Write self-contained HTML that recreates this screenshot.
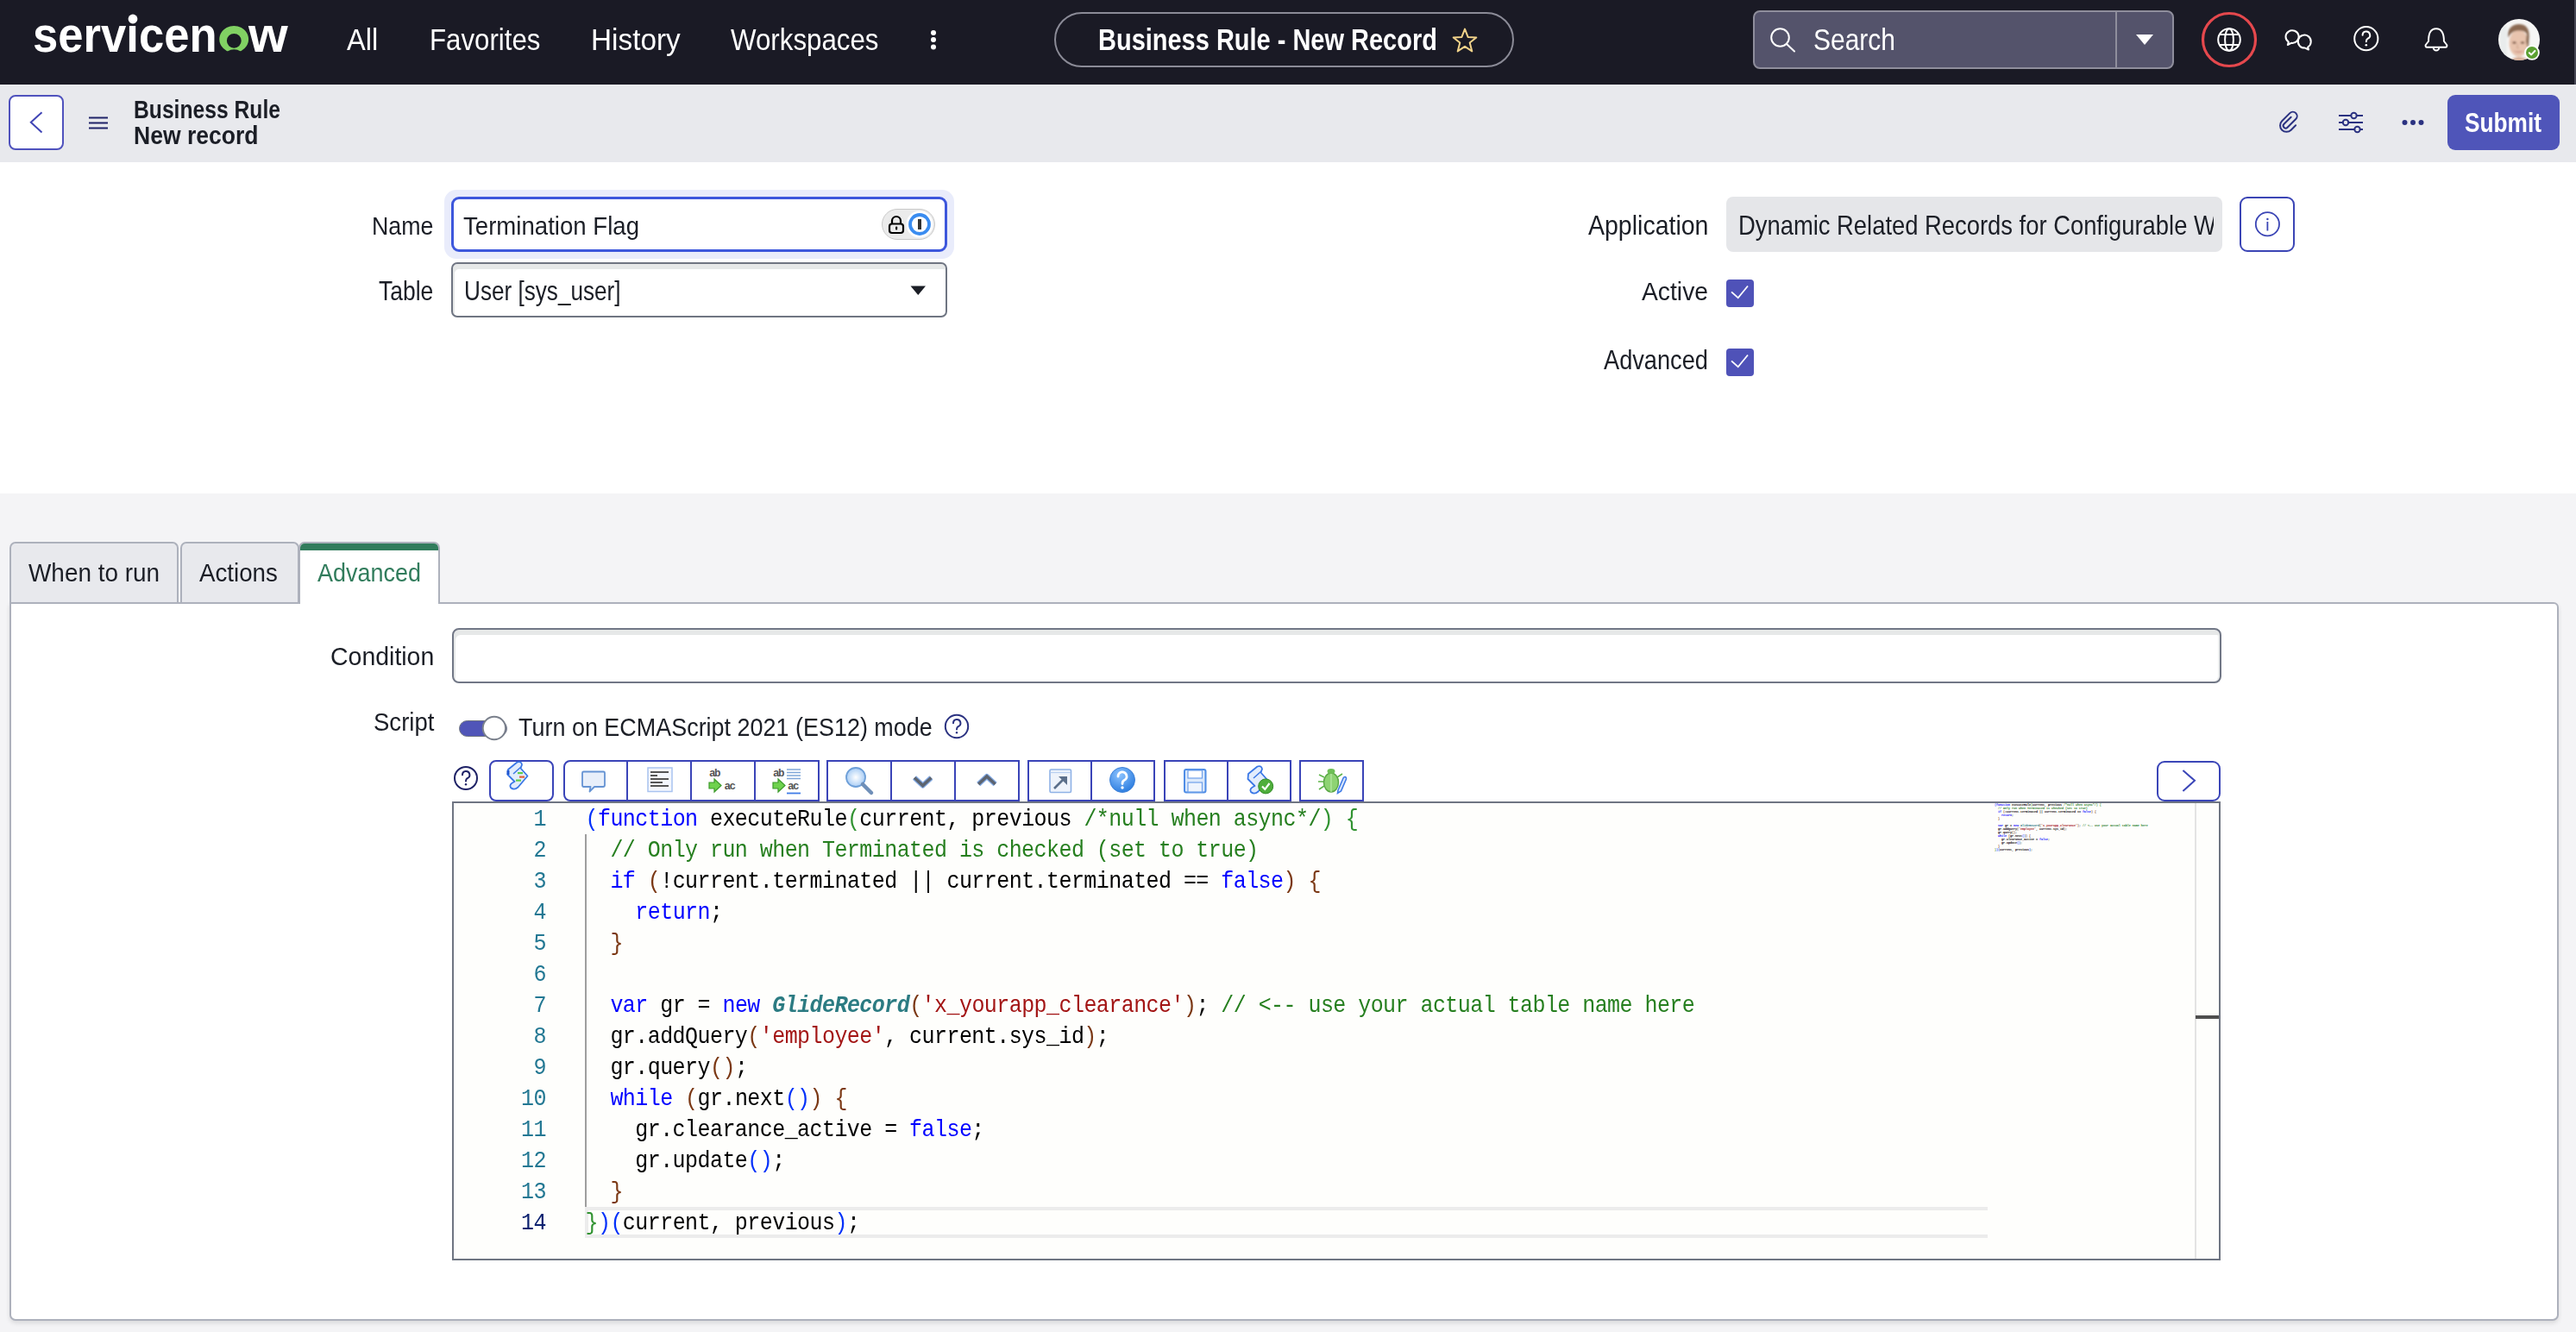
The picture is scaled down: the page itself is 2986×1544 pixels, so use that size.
<!DOCTYPE html>
<html><head><meta charset="utf-8"><title>Business Rule - New Record</title>
<style>
html,body{margin:0;padding:0;}
body{width:2986px;height:1544px;position:relative;overflow:hidden;background:#f4f4f6;font-family:"Liberation Sans",sans-serif;}
.t{position:absolute;white-space:nowrap;line-height:1;transform-origin:0 0;}
.b{position:absolute;box-sizing:border-box;}
.s{position:absolute;overflow:visible;}
.code{position:absolute;white-space:pre;font-family:"Liberation Mono",monospace;}
</style></head><body>
<div class="b" style="left:0px;top:0px;width:2986px;height:98px;background:#1a1a25"></div>
<div class="b" style="left:2984px;top:0px;width:2px;height:98px;background:#474755"></div>
<div class="b" style="left:0px;top:98px;width:2986px;height:90px;background:#e8e9ed"></div>
<div class="b" style="left:0px;top:188px;width:2986px;height:384px;background:#ffffff"></div>
<div class="b" style="left:0px;top:572px;width:2986px;height:972px;background:#f4f4f6"></div>
<div class="t" style="left:38.40px;top:11.56px;font-size:57.58px;transform:scaleX(0.9140);color:#ffffff;font-weight:bold;">servicen</div>
<div class="t" style="left:288.18px;top:11.56px;font-size:57.58px;transform:scaleX(1.0204);color:#ffffff;font-weight:bold;">w</div>
<div class="b" style="left:146px;top:14px;width:16px;height:13px;background:#1a1a25"></div>
<svg class="s" style="left:146px;top:14px;" width="16" height="16" viewBox="0 0 16 16"><circle cx="8" cy="8" r="5.4" fill="#fff"/></svg>
<svg class="s" style="left:250px;top:26px;" width="44" height="40" viewBox="0 0 44 40"><defs><mask id="lgm" maskUnits="userSpaceOnUse" x="0" y="0" width="44" height="40"><rect x="0" y="0" width="44" height="40" fill="#fff"/><ellipse cx="21.3" cy="38.2" rx="10" ry="7" fill="#000"/></mask></defs><path mask="url(#lgm)" fill="#81d163" fill-rule="evenodd" d="M21.2 3.9 A16.9 15.6 0 1 1 21.19 3.9 Z M21.3 21.3 m-8.4 0 a8.4 8.4 0 1 0 16.8 0 a8.4 8.4 0 1 0 -16.8 0 Z"/></svg>
<div class="t" style="left:402.00px;top:28.62px;font-size:34.88px;transform:scaleX(0.9341);color:#ffffff;">All</div>
<div class="t" style="left:497.80px;top:28.62px;font-size:34.88px;transform:scaleX(0.8951);color:#ffffff;">Favorites</div>
<div class="t" style="left:685.20px;top:28.62px;font-size:34.88px;transform:scaleX(0.9565);color:#ffffff;">History</div>
<div class="t" style="left:846.50px;top:28.62px;font-size:34.88px;transform:scaleX(0.8967);color:#ffffff;">Workspaces</div>
<svg class="s" style="left:1076px;top:32px;" width="12" height="28" viewBox="0 0 12 28"><circle cx="6" cy="6" r="3" fill="#fff"/><circle cx="6" cy="14" r="3" fill="#fff"/><circle cx="6" cy="22.4" r="3" fill="#fff"/></svg>
<div class="b" style="left:1222px;top:14px;width:533px;height:64px;border:2px solid #8b8b97;border-radius:32px"></div>
<div class="t" style="left:1273.00px;top:28.57px;font-size:34.88px;transform:scaleX(0.8309);color:#ffffff;font-weight:bold;">Business Rule - New Record</div>
<svg class="s" style="left:1682px;top:31px;" width="32" height="32" viewBox="0 0 32 32"><path d="M16 2.6 L19.6 11.9 L29.3 12.4 L21.7 18.6 L24.3 28.4 L16 22.9 L7.7 28.4 L10.3 18.6 L2.7 12.4 L12.4 11.9 Z" fill="none" stroke="#f2d38a" stroke-width="2" stroke-linejoin="round"/></svg>
<div class="b" style="left:2032px;top:12px;width:488px;height:68px;background:#54536b;border:2px solid #8f8e9c;border-radius:8px"></div>
<div class="b" style="left:2452px;top:12px;width:2px;height:68px;background:#8f8e9c"></div>
<svg class="s" style="left:2472px;top:36px;" width="28" height="20" viewBox="0 0 28 20"><path d="M4 4 L24 4 L14 16 Z" fill="#fff"/></svg>
<svg class="s" style="left:2048px;top:28px;" width="36" height="36" viewBox="0 0 36 36"><circle cx="15.5" cy="15.5" r="10.3" fill="none" stroke="#fff" stroke-width="2"/><path d="M23 23 L32 31.5" stroke="#fff" stroke-width="2" stroke-linecap="round"/></svg>
<div class="t" style="left:2102.00px;top:29.47px;font-size:34.88px;transform:scaleX(0.8596);color:#ffffff;">Search</div>
<svg class="s" style="left:2548px;top:10px;" width="72" height="72" viewBox="0 0 72 72"><circle cx="36" cy="36" r="30.5" fill="none" stroke="#e5484d" stroke-width="3.2"/><g fill="none" stroke="#fff" stroke-width="2"><circle cx="36" cy="36" r="12.8"/><ellipse cx="36" cy="36" rx="4.9" ry="12.8"/><path d="M24 30 H48 M24 42 H48"/></g></svg>
<svg class="s" style="left:2640px;top:26px;" width="48" height="40" viewBox="0 0 48 40"><g fill="none" stroke="#fff" stroke-width="2" stroke-linejoin="round"><path d="M12.8 22.6 L11.8 26 L16 23.8 A7.6 7.3 0 1 0 12.8 22.6 Z"/><path d="M35.2 28.5 L36 31.5 L31.8 29.6 A7.5 7.5 0 1 1 35.2 28.5 Z" fill="#1a1a25"/></g></svg>
<svg class="s" style="left:2724px;top:26px;" width="40" height="40" viewBox="0 0 40 40"><circle cx="18.8" cy="18.7" r="13.6" fill="none" stroke="#fff" stroke-width="2"/><path d="M14.6 14.8 A4.3 4.3 0 1 1 20.4 18.8 C19 19.6 18.8 20.5 18.8 22.3" fill="none" stroke="#fff" stroke-width="2" stroke-linecap="round"/><circle cx="18.8" cy="26.2" r="1.3" fill="#fff"/></svg>
<svg class="s" style="left:2804px;top:26px;" width="40" height="40" viewBox="0 0 40 40"><g transform="translate(20 18) scale(0.94) translate(-20 -18)"><path d="M10.5 22 C10.5 14 12 6.5 20 6.5 C28 6.5 29.5 14 29.5 22 L33 26.5 C33.6 27.8 33 29.5 31.5 29.5 H8.5 C7 29.5 6.4 27.8 7 26.5 Z" fill="none" stroke="#fff" stroke-width="2.1" stroke-linejoin="round"/><path d="M16.5 30 A3.5 3.5 0 0 0 23.5 30" fill="none" stroke="#fff" stroke-width="2.1"/></g></svg>
<svg class="s" style="left:2894px;top:20px;" width="56" height="56" viewBox="0 0 56 56"><defs><clipPath id="av"><circle cx="26" cy="26" r="24"/></clipPath><filter id="avb"><feGaussianBlur stdDeviation="0.9"/></filter></defs><g clip-path="url(#av)"><rect x="0" y="0" width="56" height="56" fill="#f6f6f5"/><g filter="url(#avb)"><rect x="4" y="10" width="8" height="40" fill="#e9ecec"/><path d="M16 52 C18 44 34 44 38 52 Z" fill="#d9b09a"/><ellipse cx="25.5" cy="30" rx="11" ry="15.5" fill="#e8c4ae"/><path d="M13 24 C12 13 18 8 26 8 C34 8 39 13 37.5 26 C36 19 33 15 26 15.5 C20 15.5 16 18 13 24 Z" fill="#8b6a52"/><path d="M35 18 C38 22 38 30 36 36 L34 28 Z" fill="#8b6a52"/><path d="M19 38 C22 42 29 42 32 38 C29 40 22 40 19 38 Z" fill="#c98c80"/><ellipse cx="20.5" cy="29.5" rx="2.3" ry="1.2" fill="#7a5444"/><ellipse cx="30" cy="29.5" rx="2.3" ry="1.2" fill="#7a5444"/><path d="M24.5 31 L23.5 35.5 L26 36" fill="none" stroke="#c9a08a" stroke-width="1"/></g></g><circle cx="41" cy="41" r="8.8" fill="#fff"/><circle cx="41" cy="41" r="7" fill="#5ba032"/><path d="M37.8 41.2 L40.2 43.4 L44.4 39" fill="none" stroke="#fff" stroke-width="2" stroke-linecap="round" stroke-linejoin="round"/></svg>
<div class="b" style="left:10px;top:110px;width:64px;height:64px;background:#fff;border:2px solid #4f52bd;border-radius:8px"></div>
<svg class="s" style="left:30px;top:126px;" width="24" height="32" viewBox="0 0 24 32"><path d="M18.5 4.2 L5.8 15.8 L18.5 27.4" fill="none" stroke="#4045b5" stroke-width="2"/></svg>
<svg class="s" style="left:100px;top:130.5px;" width="28" height="24" viewBox="0 0 28 24"><path d="M3 5.5 H25 M3 11.5 H25 M3 17.5 H25" stroke="#1f2368" stroke-width="2"/></svg>
<div class="t" style="left:155.00px;top:112.89px;font-size:29.07px;transform:scaleX(0.8486);color:#1b1e26;font-weight:bold;">Business Rule</div>
<div class="t" style="left:155.00px;top:142.89px;font-size:29.07px;transform:scaleX(0.9127);color:#1b1e26;font-weight:bold;">New record</div>
<svg class="s" style="left:2634px;top:124px;" width="40" height="40" viewBox="0 0 40 40"><g transform="translate(21.3 6.1) rotate(45)"><path d="M4.2 3.7 L4.2 15.2 A2.8 2.8 0 0 0 9.8 15.2 L9.8 1.4 A4.9 4.9 0 0 0 0 1.4 L0 14.3 A7.4 7.4 0 0 0 14.8 14.3 L14.8 6.6" fill="none" stroke="#2b3281" stroke-width="2" stroke-linecap="round"/></g></svg>
<svg class="s" style="left:2706px;top:124px;" width="40" height="40" viewBox="0 0 40 40"><g stroke="#2b3281" stroke-width="2" fill="none"><path d="M5 10 H33 M5 18 H33 M5 26 H33"/><circle cx="22.5" cy="10" r="3.2" fill="#e8e9ed"/><circle cx="13" cy="18" r="3.2" fill="#e8e9ed"/><circle cx="26.5" cy="26" r="3.2" fill="#e8e9ed"/></g></svg>
<svg class="s" style="left:2780px;top:134px;" width="34" height="16" viewBox="0 0 34 16"><circle cx="7.5" cy="8" r="3" fill="#2b3281"/><circle cx="17" cy="8" r="3" fill="#2b3281"/><circle cx="26.5" cy="8" r="3" fill="#2b3281"/></svg>
<div class="b" style="left:2837px;top:110px;width:130px;height:64px;background:#4f55b9;border-radius:9px"></div>
<div class="t" style="left:2857.00px;top:127.16px;font-size:30.52px;transform:scaleX(0.8604);color:#ffffff;font-weight:bold;">Submit</div>
<div class="t" style="left:430.50px;top:246.65px;font-size:29.94px;transform:scaleX(0.8950);color:#1b1e26;">Name</div>
<div class="b" style="left:515px;top:220px;width:591px;height:80px;background:#e9ecfb;border-radius:14px"></div>
<div class="b" style="left:523px;top:228px;width:575px;height:64px;background:#fff;border:3.6px solid #3d57dc;border-radius:9px"></div>
<div class="t" style="left:537.00px;top:246.65px;font-size:29.94px;transform:scaleX(0.9217);color:#1b1e26;">Termination Flag</div>
<div class="b" style="left:1022px;top:242px;width:62px;height:36px;background:#ebebeb;border:1.6px solid #c9c9c9;border-radius:18px"></div>
<svg class="s" style="left:1047px;top:242px;" width="38" height="36" viewBox="0 0 38 36"><circle cx="19" cy="18" r="15.5" fill="#fff"/><circle cx="19" cy="18" r="11" fill="none" stroke="#3a8cf0" stroke-width="3.8"/><rect x="17" y="12" width="4" height="12" fill="#333"/></svg>
<svg class="s" style="left:1026px;top:246px;" width="26" height="28" viewBox="0 0 26 28"><path d="M8 14 V10 A5 5 0 0 1 18 10 V14" fill="none" stroke="#000" stroke-width="2.2"/><rect x="5" y="13.5" width="16" height="10.5" rx="3" fill="#ececec" stroke="#000" stroke-width="2.2"/><rect x="12" y="16.5" width="2.2" height="4" rx="1" fill="#000"/></svg>
<div class="t" style="left:438.70px;top:322.16px;font-size:30.52px;transform:scaleX(0.8673);color:#1b1e26;">Table</div>
<div class="b" style="left:523px;top:304px;width:575px;height:64px;background:#fff;border:2px solid #6f7582;border-radius:7px;box-shadow:inset 2px 6px 0 #e6e8e8"></div>
<div class="t" style="left:538.00px;top:322.16px;font-size:30.52px;transform:scaleX(0.8565);color:#1b1e26;">User [sys_user]</div>
<svg class="s" style="left:1052px;top:328px;" width="24" height="18" viewBox="0 0 24 18"><path d="M3.5 3.5 L21 3.5 L12.25 14 Z" fill="#1b1e26"/></svg>
<div class="t" style="left:1840.50px;top:245.86px;font-size:30.52px;transform:scaleX(0.9342);color:#1b1e26;">Application</div>
<div class="b" style="left:2001px;top:228px;width:575px;height:64px;background:#e5e6e9;border-radius:8px"></div>
<div class="t" style="left:2015.00px;top:245.86px;font-size:30.52px;transform:scaleX(0.8971);color:#1b1e26;">Dynamic Related Records for Configurable W</div>
<div class="b" style="left:2566px;top:236px;width:9px;height:50px;background:#e5e6e9"></div>
<div class="b" style="left:2596px;top:228px;width:64px;height:64px;background:#fff;border:2px solid #3b45b5;border-radius:9px"></div>
<svg class="s" style="left:2608px;top:240px;" width="40" height="40" viewBox="0 0 40 40"><circle cx="20.4" cy="19.8" r="13.6" fill="none" stroke="#3b45b5" stroke-width="1.8"/><circle cx="20.4" cy="14" r="1.2" fill="#3b45b5"/><path d="M20.4 17 V27.5" stroke="#3b45b5" stroke-width="1.8"/></svg>
<div class="t" style="left:1903.00px;top:323.25px;font-size:29.94px;transform:scaleX(0.9444);color:#1b1e26;">Active</div>
<div class="t" style="left:1859.00px;top:402.16px;font-size:30.52px;transform:scaleX(0.8912);color:#1b1e26;">Advanced</div>
<div class="b" style="left:2001px;top:324px;width:32px;height:32px;background:#4f52b8;border-radius:4px"></div>
<svg class="s" style="left:2001px;top:324px;" width="32" height="32" viewBox="0 0 32 32"><path d="M6 14.4 L13.7 21.2 L25 7.5" fill="none" stroke="#fff" stroke-width="1.8"/></svg>
<div class="b" style="left:2001px;top:404px;width:32px;height:32px;background:#4f52b8;border-radius:4px"></div>
<svg class="s" style="left:2001px;top:404px;" width="32" height="32" viewBox="0 0 32 32"><path d="M6 14.4 L13.7 21.2 L25 7.5" fill="none" stroke="#fff" stroke-width="1.8"/></svg>
<div class="b" style="left:11px;top:628px;width:196px;height:70px;background:#e8e9ed;border:2px solid #adb1bc;border-bottom:none;border-radius:7px 7px 0 0"></div>
<div class="b" style="left:208.5px;top:628px;width:138.0px;height:70px;background:#e8e9ed;border:2px solid #adb1bc;border-bottom:none;border-radius:7px 7px 0 0"></div>
<div class="b" style="left:11px;top:697.5px;width:2955px;height:833.5px;background:#fff;border:2px solid #adb1bc;border-radius:0 6px 7px 7px;box-shadow:0 3px 5px rgba(0,0,0,0.10)"></div>
<div class="b" style="left:346.3px;top:628px;width:164.2px;height:72px;background:#fff;border:2px solid #adb1bc;border-bottom:none;border-radius:7px 7px 0 0"></div>
<div class="b" style="left:348.3px;top:630px;width:160.2px;height:8px;background:#317c5c;border-radius:5px 5px 0 0"></div>
<div class="t" style="left:32.60px;top:649.25px;font-size:29.94px;transform:scaleX(0.9326);color:#1b1e26;">When to run</div>
<div class="t" style="left:230.60px;top:649.25px;font-size:29.94px;transform:scaleX(0.9259);color:#1b1e26;">Actions</div>
<div class="t" style="left:367.60px;top:649.25px;font-size:29.94px;transform:scaleX(0.9003);color:#317c5c;">Advanced</div>
<div class="t" style="left:382.70px;top:747.19px;font-size:29.07px;transform:scaleX(0.9795);color:#1b1e26;">Condition</div>
<div class="b" style="left:523.5px;top:728px;width:2051.0px;height:64px;background:#fff;border:2px solid #717786;border-radius:8px;box-shadow:inset 2px 6px 0 #e6e8e8, inset -2px 0 0 #eceeee"></div>
<div class="t" style="left:432.60px;top:823.09px;font-size:29.07px;transform:scaleX(0.9475);color:#1b1e26;">Script</div>
<div class="b" style="left:532px;top:834.5px;width:56px;height:19.0px;background:#5055b8;border:1.5px solid #6f7582;border-radius:10px"></div>
<svg class="s" style="left:556px;top:826px;" width="36" height="36" viewBox="0 0 36 36"><circle cx="16.9" cy="18" r="13.2" fill="#fff" stroke="#7a808c" stroke-width="2"/></svg>
<div class="t" style="left:600.80px;top:829.27px;font-size:29.22px;transform:scaleX(0.9222);color:#1b1e26;">Turn on ECMAScript 2021 (ES12) mode</div>
<svg class="s" style="left:1089.4px;top:821.8px;" width="40" height="40" viewBox="0 0 40 40"><circle cx="20" cy="20" r="13.2" fill="none" stroke="#2b3281" stroke-width="2"/><path d="M16 16.2 A4.2 4.2 0 1 1 21.6 20.2 C20.5 20.9 20 21.8 20 23.6" fill="none" stroke="#2b3281" stroke-width="2" stroke-linecap="round"/><circle cx="20" cy="27.3" r="1.2" fill="#2b3281"/></svg>
<svg class="s" style="left:520px;top:882px;" width="40" height="40" viewBox="0 0 40 40"><circle cx="20" cy="20" r="13" fill="none" stroke="#1f2266" stroke-width="2"/><path d="M16 16.2 A4.2 4.2 0 1 1 21.6 20.2 C20.5 20.9 20 21.8 20 23.6" fill="none" stroke="#1f2266" stroke-width="2" stroke-linecap="round"/><circle cx="20" cy="27.3" r="1.2" fill="#1f2266"/></svg>
<div class="b" style="left:566.5px;top:881px;width:75.0px;height:48px;background:#fff;border:2px solid #3a44b8;border-radius:8px"></div>
<div class="b" style="left:652.5px;top:881px;width:297.20000000000005px;height:48px;background:#fff;border:2px solid #3a44b8;border-radius:8px 0 0 8px"></div>
<div class="b" style="left:725.8px;top:881px;width:2.0px;height:48px;background:#3a44b8"></div>
<div class="b" style="left:800.1px;top:881px;width:2.0px;height:48px;background:#3a44b8"></div>
<div class="b" style="left:874.4000000000001px;top:881px;width:2.0px;height:48px;background:#3a44b8"></div>
<div class="b" style="left:958.3px;top:881px;width:223.4000000000001px;height:48px;background:#fff;border:2px solid #3a44b8;"></div>
<div class="b" style="left:1031.7666666666667px;top:881px;width:2.0px;height:48px;background:#3a44b8"></div>
<div class="b" style="left:1106.2333333333333px;top:881px;width:2.0px;height:48px;background:#3a44b8"></div>
<div class="b" style="left:1190.6px;top:881px;width:148.60000000000014px;height:48px;background:#fff;border:2px solid #3a44b8;"></div>
<div class="b" style="left:1263.9px;top:881px;width:2.0px;height:48px;background:#3a44b8"></div>
<div class="b" style="left:1348.7px;top:881px;width:148.5999999999999px;height:48px;background:#fff;border:2px solid #3a44b8;"></div>
<div class="b" style="left:1422.0px;top:881px;width:2.0px;height:48px;background:#3a44b8"></div>
<div class="b" style="left:1506.2px;top:881px;width:75.09999999999991px;height:48px;background:#fff;border:2px solid #3a44b8;"></div>
<svg class="s" style="left:0;top:0" width="1600" height="940" viewBox="0 0 1600 940"><path d="M589 892 L599.5 883.5 Q604.5 882 605 886.5 L603.5 890.5 L611.5 899.5 L600.5 912.5 Q596 916.5 592 913 Q589.5 909 596.5 906 L588.5 898 Z" fill="#e2ecfc" stroke="#3a77e6" stroke-width="1.8" stroke-linejoin="round"/><path d="M595 897 L604 889" stroke="#3a77e6" stroke-width="1.5"/><path d="M589 893 V898" stroke="#1f56d0" stroke-width="3"/><rect x="600" y="895" width="6" height="2.2" fill="#5fcf4a"/><rect x="602" y="899.5" width="6" height="2.2" fill="#e0603a"/><rect x="598" y="903.5" width="6" height="2.2" fill="#5fcf4a"/><path d="M676.5 894.5 H699.5 Q701 894.5 701 896 V910 Q701 912 699 912 H689 L683.5 917.5 L684.5 912 H676.5 Q675 912 675 910 V896 Q675 894.5 676.5 894.5 Z" fill="#e8effa" stroke="#6593d3" stroke-width="1.8" stroke-linejoin="round"/><rect x="751" y="890" width="28" height="27.5" fill="#f4f7fd" stroke="#a9c3f0" stroke-width="1.5"/><g stroke="#555" stroke-width="1.8"><path d="M754 895 H775 M754 899 H762 M754 903 H775 M754 907 H768 M754 911 H775"/></g><g transform="translate(822,890)"><text x="0" y="10" font-family="Liberation Mono" font-size="12.5" font-weight="bold" fill="#555" letter-spacing="-1.5">ab</text><path d="M0 17 H6 V13 L14 20.5 L6 28 V24 H0 Z" fill="#6fd24e" stroke="#3c9a2a" stroke-width="1.2"/><text x="17.5" y="24.5" font-family="Liberation Mono" font-size="12.5" font-weight="bold" fill="#555" letter-spacing="-1.5">ac</text></g><g transform="translate(896,890)"><text x="0" y="10" font-family="Liberation Mono" font-size="12.5" font-weight="bold" fill="#555" letter-spacing="-1.5">ab</text><g stroke="#7fa6d8" stroke-width="1.6"><path d="M16 2 H32 M16 5.5 H32 M16 9 H32 M16 12.5 H32"/></g><path d="M16 29.5 H32" stroke="#3f7be6" stroke-width="1.8"/><path d="M0 17 H6 V13 L14 20.5 L6 28 V24 H0 Z" fill="#6fd24e" stroke="#3c9a2a" stroke-width="1.2"/><text x="17" y="24.5" font-family="Liberation Mono" font-size="12.5" font-weight="bold" fill="#555" letter-spacing="-1.5">ac</text></g><defs><radialGradient id="mg" cx="0.5" cy="0.5" r="0.5"><stop offset="0" stop-color="#ffffff"/><stop offset="1" stop-color="#a9cdf5"/></radialGradient><linearGradient id="hb" x1="0" y1="0" x2="0" y2="1"><stop offset="0" stop-color="#5aa0f0"/><stop offset="1" stop-color="#2d6fd6"/></linearGradient></defs><circle cx="992" cy="901" r="11" fill="url(#mg)" stroke="#6d9fd8" stroke-width="1.8"/><path d="M1000 909 L1010 919" stroke="#6f8fb8" stroke-width="4.5" stroke-linecap="round"/><path d="M1060 901.5 L1069.7 910.5 L1079.4 901.5" fill="none" stroke="#4f86d8" stroke-width="6" stroke-linejoin="round" opacity="0.7"/><path d="M1060 901.5 L1069.7 910.5 L1079.4 901.5" fill="none" stroke="#5c6470" stroke-width="3.6"/><path d="M1134.2 909 L1143.9 900 L1153.6 909" fill="none" stroke="#4f86d8" stroke-width="6" stroke-linejoin="round" opacity="0.7"/><path d="M1134.2 909 L1143.9 900 L1153.6 909" fill="none" stroke="#5c6470" stroke-width="3.6"/><rect x="1217" y="892" width="24.5" height="26.5" rx="1.5" fill="#eef3fb" stroke="#8fb2e6" stroke-width="1.6"/><path d="M1217.5 895.5 H1241" stroke="#b9cff0" stroke-width="1.2"/><path d="M1222 914 L1234 902" stroke="#5b6f8a" stroke-width="2.6"/><path d="M1227 900 H1237 V910 Z" fill="#5b6f8a"/><defs><radialGradient id="hg" cx="0.4" cy="0.3" r="0.7"><stop offset="0" stop-color="#8cc3ff"/><stop offset="1" stop-color="#2f7fe0"/></radialGradient></defs><circle cx="1301" cy="904" r="14.5" fill="url(#hg)" stroke="#3f82d8" stroke-width="1"/><path d="M1296 900 A5 5 0 1 1 1303 904.5 C1301.5 905.3 1301 906.3 1301 908.5" fill="none" stroke="#fff" stroke-width="2.8" stroke-linecap="round"/><circle cx="1301" cy="913" r="1.7" fill="#fff"/><rect x="1373" y="892" width="24.5" height="26.5" rx="2" fill="#dbe9fb" stroke="#4f8de6" stroke-width="2"/><rect x="1377" y="893" width="16.5" height="9" fill="#fff" stroke="#6fa0ea" stroke-width="1.2"/><rect x="1377" y="907" width="16.5" height="11" fill="#eef4fd" stroke="#6fa0ea" stroke-width="1.2"/><g transform="translate(858,5)"><path d="M589 892 L599.5 883.5 Q604.5 882 605 886.5 L603.5 890.5 L611.5 899.5 L600.5 912.5 Q596 916.5 592 913 Q589.5 909 596.5 906 L588.5 898 Z" fill="#e2ecfc" stroke="#3a77e6" stroke-width="1.8" stroke-linejoin="round"/><path d="M595 897 L604 889" stroke="#3a77e6" stroke-width="1.5"/></g><circle cx="1467.2" cy="911.4" r="8.5" fill="#4fae3c" stroke="#2f8a24" stroke-width="1"/><path d="M1463 911.5 L1466.3 914.8 L1471.5 908" fill="none" stroke="#fff" stroke-width="2.2"/><g stroke="#5fb54a" stroke-width="1.6"><path d="M1529 898 L1535 901 M1528 906 H1535 M1529 915 L1535 911 M1556 897 L1550 901"/></g><ellipse cx="1543" cy="907" rx="8.5" ry="11" fill="#8ed373" stroke="#5ba846" stroke-width="1.5"/><ellipse cx="1543" cy="894" rx="4.5" ry="3" fill="#6dbf55"/><path d="M1543 897 V918" stroke="#b8eaa6" stroke-width="1.2"/><path d="M1551 916 L1557 902 C1558.5 899.5 1561 900.5 1560.5 903 L1554.5 917 L1550.5 919.5 Z" fill="#d8e6fb" stroke="#3f7be6" stroke-width="1.6"/></svg>
<div class="b" style="left:2500px;top:881.5px;width:74px;height:47.0px;background:#fff;border:2px solid #3b46b8;border-radius:9px"></div>
<svg class="s" style="left:2520px;top:885px;" width="40" height="40" viewBox="0 0 40 40"><path d="M10.4 8 L24 19.8 L10.4 32" fill="none" stroke="#3b46b8" stroke-width="2"/></svg>
<div class="b" style="left:524px;top:929px;width:2050px;height:532px;background:#fefefc;border:2px solid #6f7582"></div>
<div class="b" style="left:2544px;top:931px;width:1.5px;height:528px;background:#e3e3e3"></div>
<div class="b" style="left:2545px;top:1177px;width:27px;height:4px;background:#4f4f4f"></div>
<div class="b" style="left:678px;top:1399px;width:1626px;height:36px;border:4px solid #ececec;border-right:none"></div>
<div class="b" style="left:678px;top:967px;width:2px;height:432px;background:#9e9e9e"></div>
<div class="code" style="left:678.5px;top:932.65px;font-size:25.0px;line-height:36px;letter-spacing:-0.557px;transform:scaleY(1.07);transform-origin:0 24.65px"><span style="color:#0431fa">(</span><span style="color:#0000ff">function</span><span style="color:#000000"> executeRule</span><span style="color:#319331">(</span><span style="color:#000000">current, previous </span><span style="color:#267f1f">/*null when async*/</span><span style="color:#319331">)</span><span style="color:#000000"> </span><span style="color:#319331">{</span></div>
<div class="code" style="left:433.00px;width:200px;text-align:right;top:932.65px;font-size:25.0px;line-height:36px;letter-spacing:-0.557px;color:#237893;transform:scaleY(1.07);transform-origin:0 24.65px">1</div>
<div class="code" style="left:2312px;top:931px;font-size:3.334px;line-height:4px;font-weight:bold"><span style="color:#0431fa">(</span><span style="color:#0000ff">function</span><span style="color:#000000"> executeRule</span><span style="color:#319331">(</span><span style="color:#000000">current, previous </span><span style="color:#267f1f">/*null when async*/</span><span style="color:#319331">)</span><span style="color:#000000"> </span><span style="color:#319331">{</span></div>
<div class="code" style="left:678.5px;top:968.65px;font-size:25.0px;line-height:36px;letter-spacing:-0.557px;transform:scaleY(1.07);transform-origin:0 24.65px"><span style="color:#000000">  </span><span style="color:#267f1f">// Only run when Terminated is checked (set to true)</span></div>
<div class="code" style="left:433.00px;width:200px;text-align:right;top:968.65px;font-size:25.0px;line-height:36px;letter-spacing:-0.557px;color:#237893;transform:scaleY(1.07);transform-origin:0 24.65px">2</div>
<div class="code" style="left:2312px;top:935px;font-size:3.334px;line-height:4px;font-weight:bold"><span style="color:#000000">  </span><span style="color:#267f1f">// Only run when Terminated is checked (set to true)</span></div>
<div class="code" style="left:678.5px;top:1004.65px;font-size:25.0px;line-height:36px;letter-spacing:-0.557px;transform:scaleY(1.07);transform-origin:0 24.65px"><span style="color:#000000">  </span><span style="color:#0000ff">if</span><span style="color:#000000"> </span><span style="color:#7b3814">(</span><span style="color:#000000">!current.terminated || current.terminated == </span><span style="color:#0000ff">false</span><span style="color:#7b3814">)</span><span style="color:#000000"> </span><span style="color:#7b3814">{</span></div>
<div class="code" style="left:433.00px;width:200px;text-align:right;top:1004.65px;font-size:25.0px;line-height:36px;letter-spacing:-0.557px;color:#237893;transform:scaleY(1.07);transform-origin:0 24.65px">3</div>
<div class="code" style="left:2312px;top:939px;font-size:3.334px;line-height:4px;font-weight:bold"><span style="color:#000000">  </span><span style="color:#0000ff">if</span><span style="color:#000000"> </span><span style="color:#7b3814">(</span><span style="color:#000000">!current.terminated || current.terminated == </span><span style="color:#0000ff">false</span><span style="color:#7b3814">)</span><span style="color:#000000"> </span><span style="color:#7b3814">{</span></div>
<div class="code" style="left:678.5px;top:1040.65px;font-size:25.0px;line-height:36px;letter-spacing:-0.557px;transform:scaleY(1.07);transform-origin:0 24.65px"><span style="color:#000000">    </span><span style="color:#0000ff">return</span><span style="color:#000000">;</span></div>
<div class="code" style="left:433.00px;width:200px;text-align:right;top:1040.65px;font-size:25.0px;line-height:36px;letter-spacing:-0.557px;color:#237893;transform:scaleY(1.07);transform-origin:0 24.65px">4</div>
<div class="code" style="left:2312px;top:943px;font-size:3.334px;line-height:4px;font-weight:bold"><span style="color:#000000">    </span><span style="color:#0000ff">return</span><span style="color:#000000">;</span></div>
<div class="code" style="left:678.5px;top:1076.65px;font-size:25.0px;line-height:36px;letter-spacing:-0.557px;transform:scaleY(1.07);transform-origin:0 24.65px"><span style="color:#000000">  </span><span style="color:#7b3814">}</span></div>
<div class="code" style="left:433.00px;width:200px;text-align:right;top:1076.65px;font-size:25.0px;line-height:36px;letter-spacing:-0.557px;color:#237893;transform:scaleY(1.07);transform-origin:0 24.65px">5</div>
<div class="code" style="left:2312px;top:947px;font-size:3.334px;line-height:4px;font-weight:bold"><span style="color:#000000">  </span><span style="color:#7b3814">}</span></div>
<div class="code" style="left:678.5px;top:1112.65px;font-size:25.0px;line-height:36px;letter-spacing:-0.557px;transform:scaleY(1.07);transform-origin:0 24.65px"></div>
<div class="code" style="left:433.00px;width:200px;text-align:right;top:1112.65px;font-size:25.0px;line-height:36px;letter-spacing:-0.557px;color:#237893;transform:scaleY(1.07);transform-origin:0 24.65px">6</div>
<div class="code" style="left:2312px;top:951px;font-size:3.334px;line-height:4px;font-weight:bold"></div>
<div class="code" style="left:678.5px;top:1148.65px;font-size:25.0px;line-height:36px;letter-spacing:-0.557px;transform:scaleY(1.07);transform-origin:0 24.65px"><span style="color:#000000">  </span><span style="color:#0000ff">var</span><span style="color:#000000"> gr = </span><span style="color:#0000ff">new</span><span style="color:#000000"> </span><span style="color:#2b7b82;font-weight:bold;font-style:italic">GlideRecord</span><span style="color:#7b3814">(</span><span style="color:#a31515">&#x27;x_yourapp_clearance&#x27;</span><span style="color:#7b3814">)</span><span style="color:#000000">; </span><span style="color:#267f1f">// &lt;-- use your actual table name here</span></div>
<div class="code" style="left:433.00px;width:200px;text-align:right;top:1148.65px;font-size:25.0px;line-height:36px;letter-spacing:-0.557px;color:#237893;transform:scaleY(1.07);transform-origin:0 24.65px">7</div>
<div class="code" style="left:2312px;top:955px;font-size:3.334px;line-height:4px;font-weight:bold"><span style="color:#000000">  </span><span style="color:#0000ff">var</span><span style="color:#000000"> gr = </span><span style="color:#0000ff">new</span><span style="color:#000000"> </span><span style="color:#2b7b82">GlideRecord</span><span style="color:#7b3814">(</span><span style="color:#a31515">&#x27;x_yourapp_clearance&#x27;</span><span style="color:#7b3814">)</span><span style="color:#000000">; </span><span style="color:#267f1f">// &lt;-- use your actual table name here</span></div>
<div class="code" style="left:678.5px;top:1184.65px;font-size:25.0px;line-height:36px;letter-spacing:-0.557px;transform:scaleY(1.07);transform-origin:0 24.65px"><span style="color:#000000">  gr.addQuery</span><span style="color:#7b3814">(</span><span style="color:#a31515">&#x27;employee&#x27;</span><span style="color:#000000">, current.sys_id</span><span style="color:#7b3814">)</span><span style="color:#000000">;</span></div>
<div class="code" style="left:433.00px;width:200px;text-align:right;top:1184.65px;font-size:25.0px;line-height:36px;letter-spacing:-0.557px;color:#237893;transform:scaleY(1.07);transform-origin:0 24.65px">8</div>
<div class="code" style="left:2312px;top:959px;font-size:3.334px;line-height:4px;font-weight:bold"><span style="color:#000000">  gr.addQuery</span><span style="color:#7b3814">(</span><span style="color:#a31515">&#x27;employee&#x27;</span><span style="color:#000000">, current.sys_id</span><span style="color:#7b3814">)</span><span style="color:#000000">;</span></div>
<div class="code" style="left:678.5px;top:1220.65px;font-size:25.0px;line-height:36px;letter-spacing:-0.557px;transform:scaleY(1.07);transform-origin:0 24.65px"><span style="color:#000000">  gr.query</span><span style="color:#7b3814">()</span><span style="color:#000000">;</span></div>
<div class="code" style="left:433.00px;width:200px;text-align:right;top:1220.65px;font-size:25.0px;line-height:36px;letter-spacing:-0.557px;color:#237893;transform:scaleY(1.07);transform-origin:0 24.65px">9</div>
<div class="code" style="left:2312px;top:963px;font-size:3.334px;line-height:4px;font-weight:bold"><span style="color:#000000">  gr.query</span><span style="color:#7b3814">()</span><span style="color:#000000">;</span></div>
<div class="code" style="left:678.5px;top:1256.65px;font-size:25.0px;line-height:36px;letter-spacing:-0.557px;transform:scaleY(1.07);transform-origin:0 24.65px"><span style="color:#000000">  </span><span style="color:#0000ff">while</span><span style="color:#000000"> </span><span style="color:#7b3814">(</span><span style="color:#000000">gr.next</span><span style="color:#0431fa">()</span><span style="color:#7b3814">)</span><span style="color:#000000"> </span><span style="color:#7b3814">{</span></div>
<div class="code" style="left:433.00px;width:200px;text-align:right;top:1256.65px;font-size:25.0px;line-height:36px;letter-spacing:-0.557px;color:#237893;transform:scaleY(1.07);transform-origin:0 24.65px">10</div>
<div class="code" style="left:2312px;top:967px;font-size:3.334px;line-height:4px;font-weight:bold"><span style="color:#000000">  </span><span style="color:#0000ff">while</span><span style="color:#000000"> </span><span style="color:#7b3814">(</span><span style="color:#000000">gr.next</span><span style="color:#0431fa">()</span><span style="color:#7b3814">)</span><span style="color:#000000"> </span><span style="color:#7b3814">{</span></div>
<div class="code" style="left:678.5px;top:1292.65px;font-size:25.0px;line-height:36px;letter-spacing:-0.557px;transform:scaleY(1.07);transform-origin:0 24.65px"><span style="color:#000000">    gr.clearance_active = </span><span style="color:#0000ff">false</span><span style="color:#000000">;</span></div>
<div class="code" style="left:433.00px;width:200px;text-align:right;top:1292.65px;font-size:25.0px;line-height:36px;letter-spacing:-0.557px;color:#237893;transform:scaleY(1.07);transform-origin:0 24.65px">11</div>
<div class="code" style="left:2312px;top:971px;font-size:3.334px;line-height:4px;font-weight:bold"><span style="color:#000000">    gr.clearance_active = </span><span style="color:#0000ff">false</span><span style="color:#000000">;</span></div>
<div class="code" style="left:678.5px;top:1328.65px;font-size:25.0px;line-height:36px;letter-spacing:-0.557px;transform:scaleY(1.07);transform-origin:0 24.65px"><span style="color:#000000">    gr.update</span><span style="color:#0431fa">()</span><span style="color:#000000">;</span></div>
<div class="code" style="left:433.00px;width:200px;text-align:right;top:1328.65px;font-size:25.0px;line-height:36px;letter-spacing:-0.557px;color:#237893;transform:scaleY(1.07);transform-origin:0 24.65px">12</div>
<div class="code" style="left:2312px;top:975px;font-size:3.334px;line-height:4px;font-weight:bold"><span style="color:#000000">    gr.update</span><span style="color:#0431fa">()</span><span style="color:#000000">;</span></div>
<div class="code" style="left:678.5px;top:1364.65px;font-size:25.0px;line-height:36px;letter-spacing:-0.557px;transform:scaleY(1.07);transform-origin:0 24.65px"><span style="color:#000000">  </span><span style="color:#7b3814">}</span></div>
<div class="code" style="left:433.00px;width:200px;text-align:right;top:1364.65px;font-size:25.0px;line-height:36px;letter-spacing:-0.557px;color:#237893;transform:scaleY(1.07);transform-origin:0 24.65px">13</div>
<div class="code" style="left:2312px;top:979px;font-size:3.334px;line-height:4px;font-weight:bold"><span style="color:#000000">  </span><span style="color:#7b3814">}</span></div>
<div class="code" style="left:678.5px;top:1400.65px;font-size:25.0px;line-height:36px;letter-spacing:-0.557px;transform:scaleY(1.07);transform-origin:0 24.65px"><span style="color:#319331">}</span><span style="color:#0431fa">)(</span><span style="color:#000000">current, previous</span><span style="color:#0431fa">)</span><span style="color:#000000">;</span></div>
<div class="code" style="left:433.00px;width:200px;text-align:right;top:1400.65px;font-size:25.0px;line-height:36px;letter-spacing:-0.557px;color:#0b216f;transform:scaleY(1.07);transform-origin:0 24.65px">14</div>
<div class="code" style="left:2312px;top:983px;font-size:3.334px;line-height:4px;font-weight:bold"><span style="color:#319331">}</span><span style="color:#0431fa">)(</span><span style="color:#000000">current, previous</span><span style="color:#0431fa">)</span><span style="color:#000000">;</span></div>
</body></html>
